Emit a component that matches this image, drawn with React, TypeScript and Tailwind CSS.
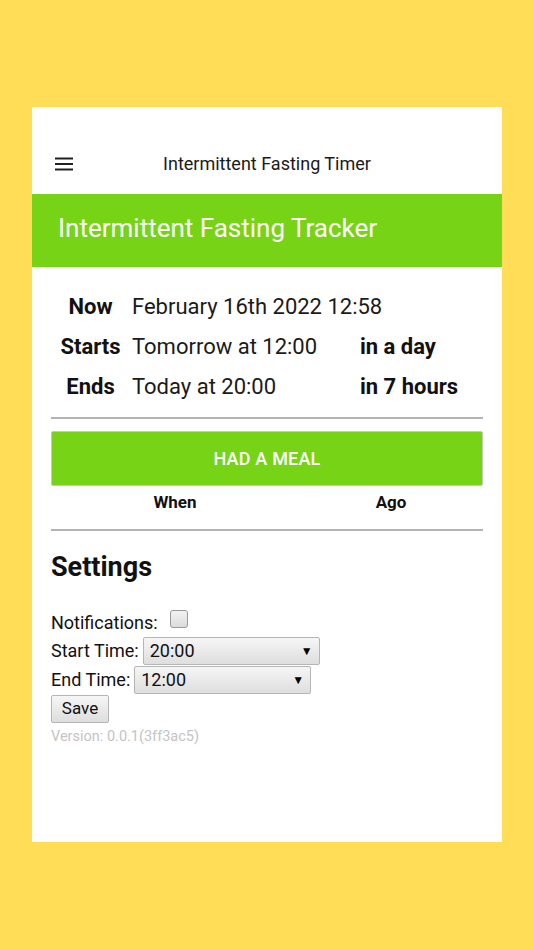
import React from 'react';

const font = { fontFamily: 'Roboto, "Noto Sans", sans-serif' };

const Hamburger = () => (
  <svg width="20" height="14" viewBox="0 0 20 14" className="block">
    <rect x="1" y="0.5" width="18" height="2" fill="#222" />
    <rect x="1" y="6" width="18" height="2" fill="#222" />
    <rect x="1" y="11.5" width="18" height="2" fill="#222" />
  </svg>
);

const FakeSelect = ({ value, width }: { value: string; width: string }) => (
  <div
    className={`${width} h-[28px] flex items-center justify-between pl-[6px] pr-[6px] border border-[#b5b5b5] rounded-[2px] bg-gradient-to-b from-[#f6f6f6] to-[#dedede] text-[18px] text-[#111]`}
  >
    <span>{value}</span>
    <span className="text-[12px] text-black">▼</span>
  </div>
);

const rows = [
  { label: 'Now', value: 'February 16th 2022 12:58', rel: '' },
  { label: 'Starts', value: 'Tomorrow at 12:00', rel: 'in a day' },
  { label: 'Ends', value: 'Today at 20:00', rel: 'in 7 hours' },
];

const App = () => {
  return (
    <div className="min-h-[950px] bg-[#FFDD57] pt-[107px] pl-[32px]" style={font}>
      <div className="w-[470px] h-[735px] bg-white">
        {/* Header */}
        <header className="h-[87px] relative">
          <div className="absolute left-[22px] top-[50px]">
            <Hamburger />
          </div>
          <div className="absolute left-0 right-0 top-[47px] text-center text-[18px] leading-[20px] text-[#1a1a1a]">
            Intermittent Fasting Timer
          </div>
        </header>

        {/* Title bar */}
        <div className="h-[73px] bg-[#76D316] flex items-center pl-[26px]">
          <h1 className="text-white text-[26px] leading-none pb-[5px]">Intermittent Fasting Tracker</h1>
        </div>

        <div className="px-[19px]">
          {/* Times table */}
          <div className="pt-[20px] pb-[10px] text-[22px] leading-[40px] text-[#1a1a1a] whitespace-nowrap">
            {rows.map(r => (
              <div key={r.label} className="flex">
                <div className="w-[79px] shrink-0 text-center font-bold text-[#111]">{r.label}</div>
                <div className="w-[230px] shrink-0 pl-[2px]">{r.value}</div>
                <div className="font-bold shrink-0 text-[#111]">{r.rel}</div>
              </div>
            ))}
          </div>

          <hr className="border-0 border-t-2 border-[#b4b4b4]" />

          <button className="mt-[12px] w-full h-[55px] bg-[#76D316] border border-[#c8c8c8] rounded-[2px] text-white text-[18px] font-medium tracking-[0.2px]">
            HAD A MEAL
          </button>

          <div className="flex h-[34px] items-center text-[17px] font-bold text-[#111]">
            <div className="w-[248px] text-center">When</div>
            <div className="w-[184px] text-center">Ago</div>
          </div>

          <hr className="mt-[9px] border-0 border-t-2 border-[#b4b4b4]" />

          {/* Settings */}
          <h2 className="mt-[20px] text-[27px] font-bold leading-[32px] text-[#111]">Settings</h2>

          <div className="mt-[25px] text-[18px] text-[#111]">
            <div className="flex items-center h-[28px]">
              <span>Notifications:</span>
              <span className="ml-[12px] mb-[7px] w-[18px] h-[18px] rounded-[3px] border border-[#9a9a9a] bg-gradient-to-b from-[#f3f3f3] to-[#dcdcdc]" />
            </div>
            <div className="flex items-center h-[29px]">
              <span className="mr-[4px]">Start Time:</span>
              <FakeSelect value="20:00" width="w-[177px]" />
            </div>
            <div className="flex items-center h-[29px]">
              <span className="mr-[4px]">End Time:</span>
              <FakeSelect value="12:00" width="w-[177px]" />
            </div>
            <button className="h-[28px] w-[58px] border border-[#b5b5b5] rounded-[2px] bg-gradient-to-b from-[#f6f6f6] to-[#dedede] text-[17px] text-[#111]">
              Save
            </button>
          </div>
          <div className="mt-[3px] text-[14.5px] text-[#c4c4c4]">Version: 0.0.1(3ff3ac5)</div>
        </div>
      </div>
    </div>
  );
};

export default App;
